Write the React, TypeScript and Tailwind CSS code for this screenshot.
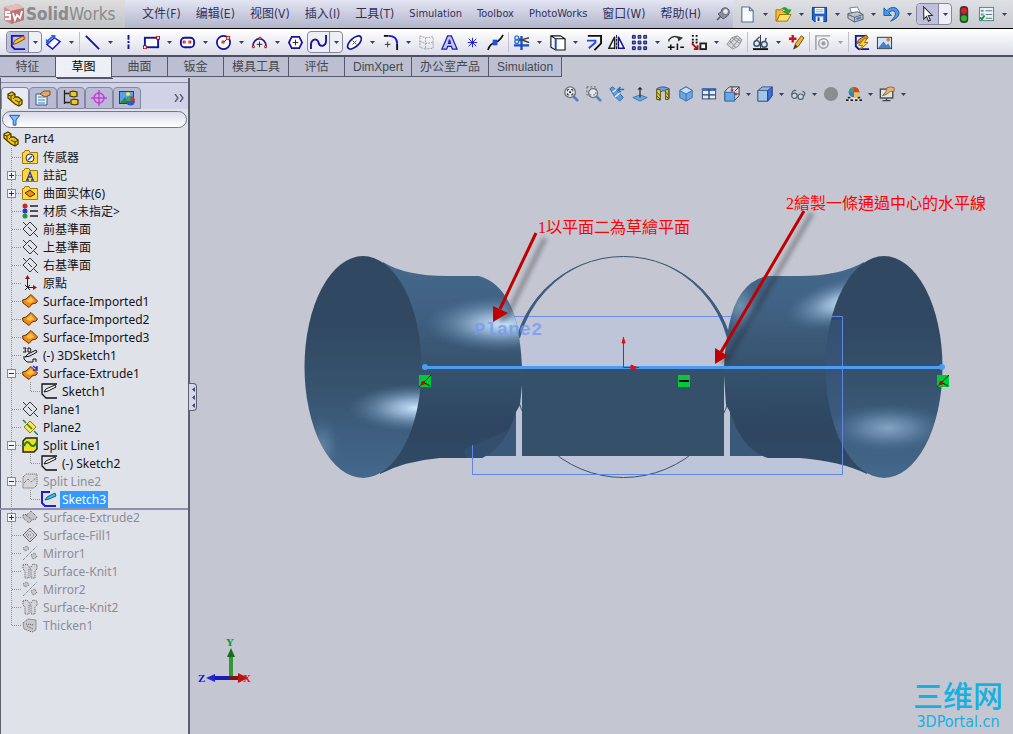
import { useState } from 'react';
import type { ReactNode } from 'react';

const NAVY = '#14149c';

// 18x18 drawings for the toolbars
const toolIcons: Record<string, ReactNode> = {
  sketch: (
    <>
      <path d="M16 2H3V13L6 16H17" fill="none" stroke="#1616c8" strokeWidth="2" />
      <path d="M4 11L6 7L15 2L17 5L8 10Z" fill="#f5c02c" stroke="#6b4510" />
      <path d="M14 3L17 2V6Z" fill="#e06060" />
    </>
  ),
  dimension: (
    <>
      <path d="M2 11L10 4L16 8L8 16Z" fill="#fff" stroke="#1616c8" strokeWidth="1.500" />
      <path d="M2 8L9 2" stroke="#2b62d8" strokeWidth="2" />
      <path d="M1 5V10H6ZM6 1H11V6Z" fill="#2b62d8" />
    </>
  ),
  line: <path d="M2 2L16 16" stroke={NAVY} strokeWidth="2" />,
  centerline: <path d="M9 1V17" stroke={NAVY} strokeWidth="2" strokeDasharray="5 1.5 2 1.5" />,
  rect: (
    <>
      <rect x="2" y="4" width="14" height="10" fill="#fff" stroke={NAVY} strokeWidth="2" />
      <path d="M0 12H4V16H0ZM14 2H18V6H14Z" fill="#b01010" />
      <path d="M1 13H3V15H1ZM15 3H17V5H15Z" fill="#fff" />
    </>
  ),
  slot: (
    <>
      <rect x="2" y="4" width="14" height="10" rx="4" fill="#fff" stroke={NAVY} strokeWidth="2" />
      <rect x="4.500" y="7.500" width="2" height="2" fill="#fff" stroke="#c01010" />
      <rect x="10.500" y="7.500" width="2" height="2" fill="#fff" stroke="#c01010" />
    </>
  ),
  circle: (
    <>
      <circle cx="9" cy="9" r="7" fill="#fff" stroke={NAVY} strokeWidth="1.800" />
      <path d="M9 9L14 4" stroke="#222" />
      <rect x="7.500" y="7.500" width="2" height="2" fill="#fff" stroke="#c01010" />
      <rect x="12.500" y="2.500" width="3" height="3" fill="#fff" stroke="#c01010" />
    </>
  ),
  arc: (
    <>
      <path d="M2 13A7 8 0 0 1 16 13" fill="none" stroke={NAVY} strokeWidth="1.800" />
      <path d="M9 8V14M6 11H12" stroke="#222" />
      <path d="M1.500 12.500H3.500V14.500H1.500ZM14.500 12.500H16.500V14.500H14.500ZM8.500 3.500H10.500V5.500H8.500Z" fill="#fff" stroke="#c01010" />
    </>
  ),
  polygon: (
    <>
      <path d="M5 3H13L16 9L13 15H5L2 9Z" fill="#fff" stroke={NAVY} strokeWidth="1.800" />
      <path d="M9 6V12M6 9H12" stroke="#222" />
    </>
  ),
  spline: <path d="M1 16V12C1 5 8 4 9 9C10 14 17 14 17 7V1" fill="none" stroke={NAVY} strokeWidth="2" />,
  ellipse: (
    <>
      <ellipse cx="9" cy="9" rx="9" ry="4.500" transform="rotate(-42 9 9)" fill="#fff" stroke={NAVY} strokeWidth="1.800" />
      <path d="M7 7L11 11M11 7L7 11" stroke="#444" />
    </>
  ),
  fillet: (
    <>
      <path d="M2 2H7" stroke="#111" strokeWidth="2" />
      <path d="M7 2Q16 2 16 10" fill="none" stroke="#1818e0" strokeWidth="2" />
      <path d="M16 10V17" stroke="#111" strokeWidth="2" />
      <path d="M3 11H9M6 8V14" stroke="#333" />
    </>
  ),
  grid: (
    <path d="M2 2L8 4V16L2 14ZM8 4L16 3V15L8 16M2 8L8 10L16 9" fill="none" stroke="#9a9aa2" strokeDasharray="2 1" />
  ),
  text: (
    <path d="M1 16L7 2H11L17 16H12L11 13H7L6 16ZM8 10H10L9 6Z" fill="#c4c8f4" stroke="#1c1cb0" strokeWidth="1.300" />
  ),
  point: <path d="M9 4V14M4 9H14M5 5L13 13M13 5L5 13" stroke="#1818d8" />,
  midpoint: (
    <>
      <path d="M1 17Q3 10 9 9Q14 7 17 1" fill="none" stroke="#111" strokeWidth="1.800" />
      <rect x="6" y="6" width="5" height="6" fill="#1f4fe0" />
    </>
  ),
  trim: (
    <>
      <path d="M1 12H17M9 2V17" stroke="#1b4fc4" strokeWidth="2.500" />
      <path d="M6 7L17 4M6 5L17 9" stroke="#444" strokeWidth="1.500" />
      <circle cx="4" cy="4" r="2" fill="none" stroke="#2d75d8" strokeWidth="1.500" />
      <circle cx="4" cy="8" r="2" fill="none" stroke="#2d75d8" strokeWidth="1.500" />
    </>
  ),
  convert: (
    <>
      <path d="M2 2H12L17 5V17H7L2 14ZM7 5H17M2 2L7 5V17" fill="#fff" stroke="#111" strokeWidth="1.200" />
      <path d="M7 5V17" stroke="#2048e8" strokeWidth="2" />
    </>
  ),
  offset: (
    <>
      <path d="M3 2H17V10L10 17" fill="none" stroke="#111" strokeWidth="2" />
      <path d="M2 7H11V9L4 15" fill="none" stroke="#2348dc" strokeWidth="2" />
    </>
  ),
  mirror: (
    <>
      <path d="M1 15L7 3V15Z" fill="#fff" stroke="#222" strokeWidth="1.600" />
      <path d="M17 15L11 3V15Z" fill="#fff" stroke={NAVY} strokeWidth="1.600" />
      <path d="M9 1V17" stroke="#111" strokeDasharray="3 1" />
    </>
  ),
  pattern: (
    <path
      d="M1.500 1.500H4.500V4.500H1.500ZM7.500 1.500H10.500V4.500H7.500ZM13.500 1.500H16.500V4.500H13.500ZM1.500 7.500H4.500V10.500H1.500ZM7.500 7.500H10.500V10.500H7.500ZM13.500 7.500H16.500V10.500H13.500ZM1.500 13.500H4.500V16.500H1.500ZM7.500 13.500H10.500V16.500H7.500ZM13.500 13.500H16.500V16.500H13.500Z"
      fill="#5d78e0"
      stroke="#111158"
    />
  ),
  move: (
    <>
      <path d="M2 8V6Q8 0 13 5" fill="none" stroke="#333" strokeWidth="1.500" />
      <path d="M11 2L17 4L12 8Z" fill="#333" />
      <path d="M1 14H8M4 11V17M11 10V17M14 14H18" stroke="#111" strokeWidth="1.600" />
    </>
  ),
  copy: (
    <>
      <path d="M2 2H10M2 6H10M2 9H10" stroke="#111" strokeWidth="2" strokeDasharray="2 2" />
      <path d="M2 10L8 16M8 12V16H4" fill="none" stroke="#b01010" strokeWidth="2" />
      <rect x="11" y="10" width="6" height="6" fill="#fff" stroke="#222" strokeWidth="2" />
    </>
  ),
  knit: (
    <g fill="#d8d8dc" stroke="#8e8e94">
      <path d="M1 11L6 4L12 2L17 6L13 13L7 16Z" />
      <path d="M4 7L10 14M6 4L15 10M9 3L16 8M3 11L12 2M6 15L15 4" fill="none" />
    </g>
  ),
  relations: (
    <>
      <path d="M1 16H17" stroke="#111" strokeWidth="2" />
      <path d="M9 1V15" stroke="#333" />
      <circle cx="5" cy="10" r="3" fill="#dce9f8" stroke="#35516e" strokeWidth="1.500" />
      <circle cx="13" cy="11" r="3" fill="#dce9f8" stroke="#35516e" strokeWidth="1.500" />
      <path d="M3 8L8 3M14 8L15 4" fill="none" stroke="#445a70" strokeWidth="1.500" />
    </>
  ),
  repair: (
    <>
      <path d="M1 5H9M5 1V9" stroke="#d01010" strokeWidth="2.500" />
      <path d="M6 16L8 10L14 2L17 4L11 13Z" fill="#f5b62c" stroke="#704a14" />
      <path d="M6 16L8 11L10 13Z" fill="#333" />
    </>
  ),
  snaps: (
    <g fill="none" stroke="#9c9ca2" strokeWidth="1.500">
      <path d="M17 2H2V17" />
      <circle cx="10" cy="10" r="5" />
      <circle cx="10" cy="10" r="1.500" fill="#9c9ca2" />
    </g>
  ),
  rapid: (
    <>
      <path d="M14 2H3V13L6 16H17" fill="none" stroke={NAVY} strokeWidth="2" />
      <path d="M4 10L6 6L14 1L16 4L8 9Z" fill="#d8962c" stroke="#6b4510" />
      <path d="M12 5L6 12H10L7 17L16 9H12L15 5Z" fill="#ffdc30" stroke="#a06810" />
    </>
  ),
  picture: (
    <>
      <rect x="1.500" y="3.500" width="15" height="12" fill="#cfe4f8" stroke="#333" />
      <path d="M2 15L8 8L11 12L13 10L16 15Z" fill="#4c7fbd" />
      <circle cx="13" cy="6" r="2" fill="#f08020" />
    </>
  ),
  newDoc: (
    <path d="M3 1H11L15 5V17H3ZM11 1V5H15" fill="#f7fbff" stroke="#55748e" strokeWidth="1.200" />
  ),
  open: (
    <>
      <path d="M1 4H7L9 6H13V9H5L2 16H1Z" fill="#f3bd32" stroke="#a8700c" />
      <path d="M5 9H17L13 16H2Z" fill="#ffe06c" stroke="#a8700c" />
      <path d="M7 3Q11 0 14 4L17 4L14 9L9 6L11 5Q10 3 7 3Z" fill="#2ea82e" stroke="#1a801a" strokeWidth=".6" />
    </>
  ),
  save: (
    <>
      <path d="M1.500 1.500H16.500V16.500H3.500L1.500 14.500Z" fill="#1f62cc" stroke="#0e3680" />
      <path d="M4 2H14V8H4Z" fill="#fff" />
      <path d="M5 4H13M5 6H13" stroke="#8aa6cf" />
      <path d="M5 11H13V17H5Z" fill="#e8edf5" />
      <path d="M7 12H9V16H7Z" fill="#1b3f7c" />
    </>
  ),
  print: (
    <>
      <path d="M5 8L3 2L11 1L14 7Z" fill="#fff" stroke="#6d7f92" />
      <path d="M1 8L11 6L17 9V14L8 17L1 13Z" fill="#bfc3ca" stroke="#555c66" />
      <path d="M1 9L8 12L17 9M8 12V17" fill="none" stroke="#555c66" />
      <path d="M10 14L15 12" stroke="#3a7ad0" strokeWidth="2" />
    </>
  ),
  undo: (
    <path d="M1 2V10H9L6 7Q11 3 13 7Q14 11 8 16Q17 13 17 7Q15 0 8 2Q6 3 4 5Z" fill="#4c9ae8" stroke="#1a559e" />
  ),
  cursor: <path d="M5 1V14L8 11L10 16L12 15L10 10H14Z" fill="#fff" stroke="#333" strokeWidth="1.200" />,
  light: (
    <>
      <rect x="5" y="0" width="9" height="18" rx="4" fill="#3a3a3a" />
      <circle cx="9.500" cy="5" r="3.200" fill="#e81c1c" />
      <circle cx="9.500" cy="13" r="3.200" fill="#22c022" />
    </>
  ),
  options: (
    <>
      <rect x="1.500" y="1.500" width="15" height="14" fill="#e9f3f6" stroke="#51808c" />
      <path d="M3 4H6V6H3ZM3 8H6V10H3Z" fill="#6f98a4" />
      <path d="M8 5H15M8 9H15M8 13H15" stroke="#5a7580" />
      <path d="M2 12L4 14L7 10" fill="none" stroke="#1d9030" strokeWidth="2" />
    </>
  ),
  zoomFit: (
    <>
      <path d="M12 12L16 16" stroke="#4c86c8" strokeWidth="3" strokeLinecap="round" />
      <circle cx="8" cy="7" r="6" fill="#e3e9f0" stroke="#6e7378" strokeWidth="1.500" />
      <path d="M5 6V4H7M9 4H11V6M11 8V10H9M7 10H5V8" fill="none" stroke="#222" />
      <path d="M7 6H9V8H7Z" fill="#222" />
    </>
  ),
  zoomArea: (
    <>
      <path d="M12 12L16 16" stroke="#4c86c8" strokeWidth="3" strokeLinecap="round" />
      <circle cx="8" cy="8" r="5" fill="#e3e9f0" stroke="#6e7378" strokeWidth="1.500" />
      <path d="M1 1H11V10H1Z" fill="none" stroke="#555" strokeDasharray="2 2" />
    </>
  ),
  previous: (
    <>
      <path d="M1 3L4 1L11 7L16 13L12 17L6 11Z" fill="#5f9fe0" stroke="#2b5d98" />
      <path d="M4 7L8 4M7 12L12 8" stroke="#e6f2fc" strokeWidth="1.500" />
      <path d="M17 4H11M13 1L10 4L13 7" fill="none" stroke="#2c66c8" strokeWidth="1.600" />
    </>
  ),
  normal: (
    <>
      <path d="M1 13L9 10L17 13L9 17Z" fill="#6ba7e4" stroke="#3a70ac" />
      <path d="M9 13V3" stroke="#222" strokeWidth="1.300" />
      <path d="M6 4L9 1L12 4Z" fill="#222" />
    </>
  ),
  section: (
    <>
      <path d="M2 3Q9 -1 16 3V14Q14 16 12 15V6Q9 4 6 7V16L2 15Z" fill="#68a4e4" stroke="#274f88" />
      <path d="M2 4H6V15H2ZM12 4H15V15H12Z" fill="#f2d32c" stroke="#66520c" />
      <path d="M2 7L6 11M2 11L6 15M12 7L15 10M12 11L15 14" stroke="#4a3c08" />
    </>
  ),
  orientation: (
    <>
      <path d="M2 5L9 1L16 5V13L9 17L2 13Z" fill="#69a8e6" stroke="#37699e" />
      <path d="M2 5L9 1L16 5L9 9Z" fill="#c4e0fa" stroke="#37699e" />
      <path d="M9 9V17" stroke="#37699e" />
    </>
  ),
  views: (
    <>
      <rect x="1.500" y="3.500" width="15" height="11" fill="#e6edf6" stroke="#2a3f6a" />
      <path d="M1 4H17" stroke="#3964b8" strokeWidth="3" />
      <path d="M9 4V15M2 10H16" stroke="#2a3f6a" strokeWidth="1.500" />
    </>
  ),
  standard: (
    <>
      <path d="M1 6L6 1H17V11L12 16H1Z" fill="#d4d8e2" stroke="#333" />
      <path d="M1 7H12V17H1Z" fill="#6aa6e4" stroke="#2b5d98" />
      <path d="M12 6L17 1M9 1V5M17 9H13" stroke="#333" />
      <path d="M7 4L9 7L11 4ZM14 7V11L11 9Z" fill="#c82020" />
    </>
  ),
  display: (
    <>
      <path d="M1 5L6 1H17V11L12 17H1Z" fill="#8fb9ee" stroke="#334c88" />
      <path d="M1 5H12V17H1Z" fill="#9dc8f2" stroke="#4a5668" />
      <path d="M12 5L17 1V11L12 17Z" fill="#3e6fd4" stroke="#263c88" />
    </>
  ),
  glasses: (
    <>
      <circle cx="5" cy="11" r="3" fill="#c9dcec" stroke="#56616e" strokeWidth="1.300" />
      <circle cx="12" cy="12" r="3" fill="#c9dcec" stroke="#56616e" strokeWidth="1.300" />
      <path d="M8 11L9 12M2 10Q2 4 7 5M15 12Q19 7 14 6" fill="none" stroke="#56616e" strokeWidth="1.300" />
    </>
  ),
  sphere: <circle cx="9" cy="9" r="8" fill="#8b8d93" />,
  appearance: (
    <>
      <path d="M3 11H15L18 17H0Z" fill="#e6e6e6" />
      <path d="M2 12H5V14H2ZM13 12H16V14H13ZM0 15H3V17H0ZM5 15H8V17H5ZM10 15H13V17H10ZM15 15H18V17H15Z" fill="#222" />
      <circle cx="9" cy="7" r="6" fill="#3c76dc" />
      <path d="M9 1A6 6 0 0 1 15 7H9Z" fill="#e23a2c" />
      <path d="M9 1A6 6 0 0 0 3 7H9Z" fill="#3fa848" />
      <path d="M15 7A6 6 0 0 1 9 13V7Z" fill="#f1c832" />
    </>
  ),
  scene: (
    <>
      <rect x="1.500" y="3.500" width="14" height="10" fill="#dfe3ea" stroke="#444" strokeWidth="1.500" />
      <path d="M4 16.500H13M8.500 14V16" stroke="#444" strokeWidth="1.500" />
      <path d="M9 2L13 1L17 2V6L13 6L9 9L4 11L8 6Z" fill="#e9b670" stroke="#8c602c" />
    </>
  ),
};

const SURFACE = (
  <>
    <path d="M0.500 7L4 6L9 1.500L15.500 8L14 10L10 11L7 14.500L1 10Z" fill="#f08c14" stroke="#5c3006" />
    <path d="M4 8L9 4L12 8L8 10Z" fill="#ffc04c" />
  </>
);

const PENCIL = (
  <>
    <path d="M16 1H1V11L5 15H16" fill="none" stroke="#111" strokeWidth="1.300" />
    <path d="M3 9L5 6L14 2L15 4L7 8Z" fill="#fff" stroke="#111" />
  </>
);

const FOLDER = <path d="M.500 3.500H2L3 1.500H7L8 3.500H15.500V14.500H.500Z" fill="#ffd83c" stroke="#a8780c" />;

const PLANE = (
  <path d="M1 8L8 1L15 8L8 15ZM1 1L4 4M6 6L10 10M12 12L16 16" fill="none" stroke="#333" />
);

const PART = (
  <>
    <path d="M1 3L5 1L8 3V6L11 6L15 9V13L12 15L8 13L1 7Z" fill="#f0c818" stroke="#4c3c04" strokeWidth="1.300" />
    <path d="M1 4L4 5L8 3M4 5V9M8 9L12 11L15 9M12 11V15M8 6L6 8" fill="none" stroke="#4c3c04" />
  </>
);

const MIRROR = (
  <g fill="#c9c9cd" stroke="#66666a" strokeDasharray="1 1">
    <path d="M1 3L5 1L7 4L3 6ZM9 10L13 8L15 12L11 14Z" />
    <path d="M1 15L15 1" />
  </g>
);

const KNIT = (
  <path
    d="M1 2L5 1L7 4L9 4L11 1L15 2V6L13 8V15H9V6L7 6V15H3V8L1 6Z"
    fill="#d5d5d9"
    stroke="#555559"
    strokeDasharray="1 1"
  />
);

// 16x16 drawings for the feature tree
const treeIcons: Record<string, ReactNode> = {
  part: PART,
  sensor: (
    <>
      {FOLDER}
      <circle cx="8" cy="9" r="4" fill="#eef4fa" stroke="#333" />
      <path d="M6 11L10 7" stroke="#2a55c0" strokeWidth="1.500" />
    </>
  ),
  note: (
    <>
      {FOLDER}
      <path d="M4 13H7M9 13H12M5 13L8 5L11 13M6 10H10" fill="none" stroke="#1c3cb4" strokeWidth="1.300" />
    </>
  ),
  bodies: (
    <>
      {FOLDER}
      <path d="M3 8L8 5L13 9L8 12Z" fill="#f08c18" stroke="#4c2c04" />
    </>
  ),
  material: (
    <>
      <circle cx="3" cy="3" r="2.500" fill="#d82020" />
      <circle cx="3" cy="8" r="2.500" fill="#2038c8" />
      <circle cx="3" cy="13" r="2.500" fill="#1c9838" />
      <path d="M8 3H16M8 8H16M8 13H16" stroke="#222" strokeWidth="1.500" />
    </>
  ),
  plane: PLANE,
  origin: (
    <>
      <path d="M5.500 12.500V3M5 12.500H13" stroke="#222" />
      <path d="M3 4L5.500 0L8 4ZM11 10L15 12.500L11 15Z" fill="#981818" />
      <path d="M3 10L8 15M8 10L3 15" stroke="#222" />
    </>
  ),
  surface: SURFACE,
  sketch3d: (
    <>
      <path d="M1 1H4L3 3L4 5H1M6 1V5H8Q10 3 8 1Z" fill="none" stroke="#111" />
      <path d="M3 10L6 7L14 3L15 5L8 9ZM2 9V12L5 15H11V12H14V15" fill="none" stroke="#111" />
    </>
  ),
  extrude: (
    <>
      {SURFACE}
      <path d="M11 1L15 4M15 1V5H11" fill="none" stroke="#1c30d8" strokeWidth="1.500" />
    </>
  ),
  sketch: PENCIL,
  plane2: (
    <>
      <path d="M2 8L8 2L14 8L8 14Z" fill="#ffe24c" stroke="#947414" />
      <path d="M1 1L4 4M5 5L10 10M12 12L16 16" stroke="#189028" strokeWidth="1.500" />
    </>
  ),
  split: (
    <>
      <path d="M1 4L4 1H15V12L12 15H1Z" fill="#f2e018" stroke="#222" strokeWidth="1.500" />
      <path d="M2 9Q5 2 8 7T15 5" fill="none" stroke="#188028" strokeWidth="2" />
    </>
  ),
  splitOff: (
    <path d="M1 4L4 1H15V12L12 15H1ZM2 10L6 6L9 9L14 5" fill="#d6d6da" stroke="#555559" strokeDasharray="1 1" />
  ),
  sketchActive: (
    <>
      <path d="M9 1H1V12L4 15H15" fill="none" stroke="#1c1ce0" strokeWidth="2" />
      <path d="M4 9L6 6L14 2L15 5L8 8Z" fill="#30c8e8" stroke="#145c80" />
    </>
  ),
  surfaceOff: (
    <path d="M1 6L6 5L9 2L15 8L14 10L10 11L7 14L1 9ZM4 6L10 11" fill="#c4c4c8" stroke="#555559" strokeDasharray="1 1" />
  ),
  fill: (
    <g fill="none" stroke="#66666a">
      <path d="M1 8L8 1L15 8L8 15Z" fill="#d4d4d8" />
      <path d="M4 8L8 4L12 8L8 12ZM6 8H10" strokeDasharray="1 1" />
    </g>
  ),
  mirror: MIRROR,
  knit: KNIT,
  thicken: (
    <path d="M1 6L6 2L14 3V13L10 15L2 12ZM4 7L12 8M5 9L11 12" fill="#c8c8cc" stroke="#555559" strokeDasharray="1 1" />
  ),
};

type Tool = { icon: string; label: string; menu?: boolean; framed?: boolean; pressed?: boolean; sep?: boolean; off?: boolean };

const sketchTools: Tool[] = [
  { icon: 'sketch', label: 'Sketch', menu: true, framed: true, pressed: true },
  { icon: 'dimension', label: 'Smart Dimension', menu: true, sep: true },
  { icon: 'line', label: 'Line', menu: true },
  { icon: 'centerline', label: 'Centerline' },
  { icon: 'rect', label: 'Rectangle', menu: true },
  { icon: 'slot', label: 'Slot', menu: true },
  { icon: 'circle', label: 'Circle', menu: true },
  { icon: 'arc', label: 'Arc', menu: true },
  { icon: 'polygon', label: 'Polygon' },
  { icon: 'spline', label: 'Spline', menu: true, framed: true },
  { icon: 'ellipse', label: 'Ellipse', menu: true },
  { icon: 'fillet', label: 'Fillet', menu: true },
  { icon: 'grid', label: 'Grid' },
  { icon: 'text', label: 'Text' },
  { icon: 'point', label: 'Point' },
  { icon: 'midpoint', label: 'Midpoint', sep: true },
  { icon: 'trim', label: 'Trim', menu: true },
  { icon: 'convert', label: 'Convert Entities', menu: true },
  { icon: 'offset', label: 'Offset' },
  { icon: 'mirror', label: 'Mirror' },
  { icon: 'pattern', label: 'Linear Pattern', menu: true },
  { icon: 'move', label: 'Move' },
  { icon: 'copy', label: 'Copy', menu: true },
  { icon: 'knit', label: 'Knit', sep: true },
  { icon: 'relations', label: 'Relations', menu: true },
  { icon: 'repair', label: 'Repair', sep: true },
  { icon: 'snaps', label: 'Quick Snaps', menu: true, sep: true, off: true },
  { icon: 'rapid', label: 'Rapid Sketch' },
  { icon: 'picture', label: 'Sketch Picture' },
];

const fileTools: Tool[] = [
  { icon: 'newDoc', label: 'New', menu: true },
  { icon: 'open', label: 'Open', menu: true },
  { icon: 'save', label: 'Save', menu: true },
  { icon: 'print', label: 'Print', menu: true },
  { icon: 'undo', label: 'Undo', menu: true },
  { icon: 'cursor', label: 'Select', menu: true, framed: true, pressed: true },
  { icon: 'light', label: 'Rebuild' },
  { icon: 'options', label: 'Options', menu: true },
];

const viewTools: Tool[] = [
  { icon: 'zoomFit', label: 'Zoom to Fit' },
  { icon: 'zoomArea', label: 'Zoom to Area' },
  { icon: 'previous', label: 'Previous View' },
  { icon: 'normal', label: 'Normal To' },
  { icon: 'section', label: 'Section View' },
  { icon: 'orientation', label: 'Orientation' },
  { icon: 'views', label: 'Viewports' },
  { icon: 'standard', label: 'Standard Views', menu: true },
  { icon: 'display', label: 'Display Style', menu: true },
  { icon: 'glasses', label: 'Hide/Show', menu: true },
  { icon: 'sphere', label: 'Shadows' },
  { icon: 'appearance', label: 'Appearance', menu: true },
  { icon: 'scene', label: 'View Settings', menu: true },
];

const menus = ['文件(F)', '编辑(E)', '视图(V)', '插入(I)', '工具(T)', 'Simulation', 'Toolbox', 'PhotoWorks', '窗口(W)', '帮助(H)'];
const tabs = ['特征', '草图', '曲面', '钣金', '模具工具', '评估', 'DimXpert', '办公室产品', 'Simulation'];

type Row = { name: string; icon: string; level?: number; box?: '+' | '-'; off?: boolean; selected?: boolean; last?: boolean };

const rows: Row[] = [
  { name: '传感器', icon: 'sensor' },
  { name: '註記', icon: 'note', box: '+' },
  { name: '曲面实体(6)', icon: 'bodies', box: '+' },
  { name: '材质 <未指定>', icon: 'material' },
  { name: '前基準面', icon: 'plane' },
  { name: '上基準面', icon: 'plane' },
  { name: '右基準面', icon: 'plane' },
  { name: '原點', icon: 'origin' },
  { name: 'Surface-Imported1', icon: 'surface' },
  { name: 'Surface-Imported2', icon: 'surface' },
  { name: 'Surface-Imported3', icon: 'surface' },
  { name: '(-) 3DSketch1', icon: 'sketch3d' },
  { name: 'Surface-Extrude1', icon: 'extrude', box: '-' },
  { name: 'Sketch1', icon: 'sketch', level: 2 },
  { name: 'Plane1', icon: 'plane' },
  { name: 'Plane2', icon: 'plane2' },
  { name: 'Split Line1', icon: 'split', box: '-' },
  { name: '(-) Sketch2', icon: 'sketch', level: 2 },
  { name: 'Split Line2', icon: 'splitOff', box: '-', off: true },
  { name: 'Sketch3', icon: 'sketchActive', level: 2, selected: true },
  { name: 'Surface-Extrude2', icon: 'surfaceOff', box: '+', off: true },
  { name: 'Surface-Fill1', icon: 'fill', off: true },
  { name: 'Mirror1', icon: 'mirror', off: true },
  { name: 'Surface-Knit1', icon: 'knit', off: true },
  { name: 'Mirror2', icon: 'mirror', off: true },
  { name: 'Surface-Knit2', icon: 'knit', off: true },
  { name: 'Thicken1', icon: 'thicken', off: true, last: true },
];

const Caret = ({ off }: { off?: boolean }) => (
  <svg width="5" height="3" viewBox="0 0 5 3">
    <path d="M0 0H5L2.500 3Z" fill={off ? '#9c9ca6' : '#3c3c64'} />
  </svg>
);

const ToolButton = ({ tool, small }: { tool: Tool; small?: boolean }) => (
  <>
    <div className={`flex h-[22px] shrink-0 ${tool.framed ? 'rounded border border-[#85879c] bg-[#eeeff6]' : ''}`}>
      <button
        type="button"
        aria-label={tool.label}
        className={`flex items-center justify-center ${tool.framed ? 'w-[22px] rounded-l border-r border-[#85879c]' : 'w-[23px]'} ${tool.pressed ? 'bg-[#bfc1dc]' : ''}`}
      >
        <svg className={small ? 'size-4' : 'size-[17px]'} viewBox="0 0 18 18">
          {toolIcons[tool.icon]}
        </svg>
      </button>
      {tool.menu && (
        <button
          type="button"
          aria-label={`${tool.label} menu`}
          className={`flex items-center justify-center ${small ? 'w-[10px]' : tool.framed ? 'w-3' : 'w-[13px]'}`}
        >
          <Caret off={tool.off} />
        </button>
      )}
    </div>
    {tool.sep && <span className="mx-px h-5 w-px shrink-0 bg-[#c0c1cc]" />}
  </>
);

const TitleBar = () => (
  <header className="flex h-[29px] border-b border-black">
    <div className="flex w-[125px] shrink-0 items-center bg-linear-to-b from-[#dededf] to-[#c2c3c6] pl-[3px]">
      <svg className="size-[22px] shrink-0" viewBox="0 0 22 22">
        <path d="M1 4L15 1L21 5V17L8 21L1 17Z" fill="#c98f92" />
        <path d="M1 4L15 1L21 5L8 8Z" fill="#e3bdbe" />
        <path d="M8 8L21 5V17L8 21Z" fill="#b8767a" />
        <path d="M7 9H3V12H7V16H2M10 10L12 17L14 12L17 15L19 8" fill="none" stroke="#fff" strokeWidth="1.800" />
      </svg>
      <span className="ml-px text-[17px] leading-6 text-[#8a8a8c]">
        <b>Solid</b>Works
      </span>
    </div>
    <nav className="flex w-[608px] shrink-0 items-center gap-[15px] bg-linear-to-b from-[#e3e5f3] to-[#b3b6cb] pl-[17px] text-[#30305c]">
      {menus.map((m) => (
        <button key={m} type="button" className={`shrink-0 whitespace-nowrap ${m.includes('(') ? 'text-xs' : 'text-[11px]'}`}>
          {m}
        </button>
      ))}
      <button type="button" aria-label="Pin menu">
        <svg className="size-[14px]" viewBox="0 0 14 14">
          <path d="M1 13L5 9" stroke="#555" strokeWidth="1.500" />
          <path d="M2 7L5 5L6 2Q10 -1 13 3Q14 8 10 10L7 12Z" fill="#8c8ea0" stroke="#55576a" />
          <circle cx="9.500" cy="4.500" r="3" fill="#e6e8f0" stroke="#6b6d7c" />
        </svg>
      </button>
    </nav>
    <div className="flex flex-1 items-center bg-linear-to-b from-[#dfe0e4] to-[#c9cbd2] pl-[3px]">
      {fileTools.map((t) => (
        <ToolButton key={t.icon} tool={t} />
      ))}
    </div>
  </header>
);

const CommandTabs = () => {
  const [active, setActive] = useState('草图');

  return (
    <div className="flex h-[21px] items-start font-['Liberation_Sans','Noto_Sans_CJK_SC',sans-serif]">
      {tabs.map((t) => (
        <button
          key={t}
          type="button"
          onClick={() => setActive(t)}
          className={`min-w-14 whitespace-nowrap border-r border-b border-[#555a6c] px-2 text-xs ${
            active === t ? 'h-[21px] bg-[#eef0f7] text-black' : 'h-5 bg-[#bcbfd2] text-[#46474e]'
          }`}
        >
          {t}
        </button>
      ))}
    </div>
  );
};

const Gutter = ({ row }: { row: Row }) => (
  <svg className="shrink-0" width={row.level === 2 ? 41 : 22} height="18" viewBox={row.level === 2 ? '0 0 41 18' : '0 0 22 18'}>
    <g fill="none" stroke="#8c8e98" strokeDasharray="1 1">
      <path d={row.last ? 'M11.500 0V9' : 'M11.500 0V18'} />
      <path d={row.level === 2 ? 'M30.500 0V9.500H40' : 'M12 9.500H21'} />
    </g>
    {row.box && (
      <>
        <rect x="7.500" y="5.500" width="8" height="8" fill="#f4f5fa" stroke="#888a96" />
        <path d={row.box === '+' ? 'M9 9.500H14M11.500 7V12' : 'M9 9.500H14'} stroke="#28288c" />
      </>
    )}
  </svg>
);

const FeatureTree = () => (
  <ul className="font-['Noto_Sans','Noto_Sans_CJK_TC',sans-serif] text-xs text-[#141418]">
    <li className="flex h-[18px] items-center gap-[5px] pl-[3px]">
      <svg className="size-4" viewBox="0 0 16 16">{treeIcons.part}</svg>
      Part4
    </li>
    {rows.map((row) => (
      <li key={row.name} className={`flex h-[18px] items-center ${row.selected ? 'relative' : ''}`}>
        <Gutter row={row} />
        <svg className="size-4 shrink-0" viewBox="0 0 16 16">{treeIcons[row.icon]}</svg>
        <span
          className={`ml-[3px] whitespace-nowrap px-0.5 leading-[17px] ${row.off ? 'text-[#8b8d96]' : ''} ${row.selected ? 'bg-[#3399ff] text-white' : ''}`}
        >
          {row.name}
        </span>
        {/* Rollback bar */}
        {row.selected && <span className="absolute inset-x-0 top-full h-0.5 bg-[#8f90ae]" />}
      </li>
    ))}
  </ul>
);

const panelTabs: { label: string; art: ReactNode }[] = [
  { label: 'FeatureManager', art: PART },
  {
    label: 'PropertyManager',
    art: (
      <>
        <path d="M1 4H12V15H1Z" fill="#e4f1fc" stroke="#3a5a80" />
        <path d="M3 7H10M3 10H10M3 13H10" stroke="#3a80d0" />
        <path d="M5 4L9 1H15V5L10 7Z" fill="#e2a868" stroke="#7c5020" />
      </>
    ),
  },
  {
    label: 'ConfigurationManager',
    art: (
      <>
        <path d="M1.500 0V14M1 3.500H6M1 12.500H7" fill="none" stroke="#222" strokeWidth="1.300" />
        <path d="M7 2L10 1L14 2V6L11 7L7 6ZM8 10L11 9L15 10V14L12 15L8 14Z" fill="#f2c81c" stroke="#3c3004" strokeWidth="1.200" />
      </>
    ),
  },
  {
    label: 'DimXpertManager',
    art: (
      <>
        <circle cx="8" cy="8" r="5" fill="none" stroke="#c83cd8" strokeWidth="1.500" />
        <path d="M8 0V16M0 8H16" stroke="#c83cd8" strokeWidth="1.500" />
      </>
    ),
  },
  {
    label: 'DisplayManager',
    art: (
      <>
        <rect x=".5" y="1.500" width="14" height="12" fill="#5aa0ec" stroke="#1e3c78" />
        <path d="M1 13L6 7L10 13Z" fill="#2c8c3c" />
        <circle cx="9" cy="4" r="2" fill="#ffe040" />
        <circle cx="11.500" cy="11" r="4.500" fill="#2c58d0" />
        <path d="M11.500 6.500A4.500 4.500 0 0 1 16 11H11.500Z" fill="#e03020" />
        <path d="M11.500 6.500A4.500 4.500 0 0 0 7 11H11.500Z" fill="#30b040" />
      </>
    ),
  },
];

const SidePanel = () => (
  <aside className="relative w-[190px] shrink-0 border-r-2 border-l border-[#5c5e72] bg-[#e0e2ea]">
    <div className="flex h-[5px] justify-center border-b border-[#8b8da2] bg-[#d3d6e6] pr-5">
      <span className="h-px w-14 bg-[#565869]" />
    </div>
    <div className="flex h-[26px] items-end bg-[#d0d2e8] pr-1">
      {panelTabs.map((t, i) => (
        <button
          key={t.label}
          type="button"
          aria-label={t.label}
          className={`flex h-[22px] w-7 items-center justify-center rounded-t border border-[#8688a2] ${i === 0 ? 'border-b-0 bg-[#e8eaf2]' : 'bg-[#b9bbd4]'}`}
        >
          <svg className="size-4" viewBox="0 0 16 16">{t.art}</svg>
        </button>
      ))}
      <button type="button" aria-label="Expand panel" className="ml-auto flex h-[22px] items-center">
        <svg width="10" height="8" viewBox="0 0 10 8">
          <path d="M1 0L4 4L1 8M6 0L9 4L6 8" fill="none" stroke="#54566c" strokeWidth="1.300" />
        </svg>
      </button>
    </div>
    <label className="mx-px mt-0.5 flex h-[17px] items-center rounded-full border border-[#75778e] bg-linear-to-b from-[#d9dbe8] to-white pl-1.5">
      <svg className="size-3" viewBox="0 0 12 12">
        <path d="M.500 1H11.500L7.500 6V11.500H4.500V6Z" fill="#7cc0f8" stroke="#1c50b8" />
      </svg>
      <input type="text" aria-label="Filter" className="h-3 w-full min-w-0 bg-transparent px-1 text-xs outline-none" />
    </label>
    <div className="-ml-px pt-0.5">
      <FeatureTree />
    </div>
    {/* Splitter handle */}
    <button
      type="button"
      aria-label="Collapse panel"
      className="absolute top-[305px] -right-[9px] z-10 flex h-7 w-2 items-center justify-center rounded-r border border-l-0 border-[#5c5e72] bg-[#d6d8e6]"
    >
      <svg width="4" height="21" viewBox="0 0 4 21">
        <path d="M4 0V5L1 2.500ZM4 8V13L1 10.500ZM4 16V21L1 18.500Z" fill="#44468c" />
      </svg>
    </button>
  </aside>
);

const Model = () => (
  <svg className="absolute inset-0 size-full" viewBox="190 78 823 656">
    <defs>
      <linearGradient id="body" x1="0" y1="262" x2="0" y2="474" gradientUnits="userSpaceOnUse">
        <stop offset="0" stopColor="#44688b" />
        <stop offset=".2" stopColor="#416284" />
        <stop offset=".5" stopColor="#36526d" />
        <stop offset=".78" stopColor="#2e4660" />
        <stop offset="1" stopColor="#304a66" />
      </linearGradient>
      <linearGradient id="mouth" x1="0" y1="256" x2="0" y2="478" gradientUnits="userSpaceOnUse">
        <stop offset="0" stopColor="#304862" />
        <stop offset=".3" stopColor="#304861" />
        <stop offset=".6" stopColor="#37546f" />
        <stop offset="1" stopColor="#44698d" />
      </linearGradient>
      <radialGradient id="shine">
        <stop offset="0" stopColor="#cbe6ff" />
        <stop offset=".35" stopColor="#a9c8e6" stopOpacity=".75" />
        <stop offset="1" stopColor="#5c82a6" stopOpacity="0" />
      </radialGradient>
      <radialGradient id="glow">
        <stop offset="0" stopColor="#86a5c5" />
        <stop offset=".4" stopColor="#7394b5" stopOpacity=".7" />
        <stop offset="1" stopColor="#4c7093" stopOpacity="0" />
      </radialGradient>
      <filter id="soft" x="-20%" y="-20%" width="140%" height="140%">
        <feGaussianBlur stdDeviation="2" />
      </filter>
      <clipPath id="leftBody">
        <path d="M383 262Q405 276 448 276H479Q507 284 517 325Q521 345 522 367V385L520 405L516 412Q506 446 482 458H440Q405 461 380 474Z" />
      </clipPath>
      <clipPath id="rightBody">
        <path d="M864 262Q840 276 799 276H767Q738 282 729 325Q725 345 724 367V375L726 405L730 412Q742 450 768 458H800Q840 461 867 474Z" />
      </clipPath>
      <clipPath id="leftMouth">
        <ellipse cx="363" cy="367" rx="58.500" ry="111" />
      </clipPath>
      <clipPath id="rightMouth">
        <ellipse cx="884" cy="367" rx="58.500" ry="111" />
      </clipPath>
    </defs>

    {/* Reference plane */}
    <rect x="472.500" y="316.500" width="370" height="158" fill="#b4c4e8" fillOpacity=".35" stroke="#6c90ec" />

    {/* Centre circle and block */}
    <circle cx="623.500" cy="367" r="110.500" fill="none" stroke="#38536e" />
    <path
      d="M516.800 338A110.500 110.500 0 0 1 590 261.700A112 112 0 0 0 520 338ZM730.200 338A110.500 110.500 0 0 0 657 261.700A112 112 0 0 1 727 338Z"
      fill="#3b5c7e"
    />
    <rect x="522" y="367" width="202" height="89" fill="#355069" />

    {/* Left horn */}
    <path d="M472 440L516 410V456H472Z" fill="#3a5878" />
    <g clipPath="url(#leftBody)">
      <rect x="370" y="255" width="155" height="225" fill="url(#body)" />
      <ellipse cx="502" cy="324" rx="78" ry="28" fill="url(#shine)" />
      <path d="M465 449L522 424V460H465Z" fill="#38557a" fillOpacity=".5" />
    </g>
    <g clipPath="url(#leftMouth)">
      <rect x="300" y="250" width="125" height="235" fill="url(#mouth)" />
      <ellipse cx="416" cy="408" rx="68" ry="24" fill="url(#shine)" />
      <ellipse cx="322" cy="446" rx="18" ry="30" fill="url(#glow)" opacity=".5" />
    </g>

    {/* Right horn */}
    <path d="M730 405L776 440V456H730Z" fill="#3a5878" />
    <g clipPath="url(#rightBody)">
      <rect x="720" y="255" width="155" height="225" fill="url(#body)" />
      <ellipse cx="846" cy="302" rx="62" ry="24" fill="url(#shine)" transform="rotate(-14 846 302)" />
      <ellipse cx="740" cy="306" rx="22" ry="28" fill="url(#glow)" opacity=".7" />
    </g>
    <g clipPath="url(#rightMouth)">
      <rect x="820" y="250" width="125" height="235" fill="url(#mouth)" />
      <path d="M825 320H842V460H825Z" fill="#3c5c84" opacity=".45" />
      <ellipse cx="888" cy="428" rx="60" ry="24" fill="url(#glow)" />
    </g>
    <path d="M831 316.500H842.500V474.500H472.500V445" fill="none" stroke="#5f86e4" />

    <text x="474" y="335" fontSize="19" fontFamily="Liberation Mono, monospace" fontWeight="bold" fill="#7298f0" fillOpacity=".75">
      Plane2
    </text>

    {/* Sketch line with its relations */}
    <path d="M425 367.500H942" stroke="#4a9cf4" strokeWidth="3" />
    <circle cx="425" cy="367" r="3" fill="#4a9cf4" />
    <circle cx="942" cy="367" r="3" fill="#4a9cf4" />
    <path d="M623.500 337V367.500H639" fill="none" stroke="#f00" />
    <path d="M622 343L623.500 338L625 343ZM631 365L637 367.500L631 370Z" fill="#f00" stroke="#f00" />
    {[419, 937].map((x) => (
      <g key={x}>
        <rect x={x} y="375" width="12" height="12" fill="#04c83c" />
        <path d={`M${x} 387L${x + 12} 375M${x + 4} 382L${x + 11} 386`} stroke="#111" />
        <circle cx={x + 4} cy="383" r="2" fill="#d00000" />
      </g>
    ))}
    <rect x="678" y="375" width="12" height="12" fill="#04c83c" />
    <path d="M679 381H689" stroke="#000" strokeWidth="2" />

    {/* Callout arrows */}
    <g filter="url(#soft)" opacity=".35">
      <path d="M545 238L507 316M812 213L728 358" stroke="#222" strokeWidth="5" />
      <path d="M500 324L500 309L514 315ZM721 366L722 351L734 358Z" fill="#222" />
    </g>
    <path d="M536 233L500 309M804 211L721 352" stroke="#c00000" strokeWidth="3" />
    <path d="M493 322V306L508 313ZM715 364V348L728 356Z" fill="#c00000" />
    <g fontSize="16" fontFamily="Liberation Serif, Noto Sans CJK TC, sans-serif" fill="#ff0000">
      <text x="538" y="233">1以平面二為草繪平面</text>
      <text x="786" y="209">2繪製一條通過中心的水平線</text>
    </g>

    {/* Axis triad */}
    <path d="M231 678V655" stroke="#2f9a34" strokeWidth="4" />
    <path d="M227 657L231 648L235 657Z" fill="#176c1c" />
    <path d="M231 678H214" stroke="#1c1cb4" strokeWidth="4" />
    <path d="M215 674L206 678L215 682Z" fill="#2424d4" />
    <path d="M230 678H240" stroke="#7c1414" strokeWidth="4" />
    <path d="M238 673L248 678L238 683Z" fill="#b81414" />
    <g fontSize="11" fontWeight="bold" fontFamily="Liberation Serif, serif">
      <text x="226" y="646" fill="#109018">Y</text>
      <text x="198" y="682" fill="#1010e8">Z</text>
      <text x="243" y="682" fill="#f01010">X</text>
    </g>
  </svg>
);

const Viewport = () => (
  <main className="relative min-w-0 flex-1">
    <Model />
    <div className="relative flex justify-end pt-[5px] pr-[105px]">
      {viewTools.map((t) => (
        <ToolButton key={t.icon} tool={t} small />
      ))}
    </div>
    {/* Watermark */}
    <div className="absolute right-2.5 bottom-1 text-center text-[#18b0e0]">
      <div className="text-3xl leading-[34px] font-medium">三维网</div>
      <div className="text-base leading-4">3DPortal.cn</div>
    </div>
  </main>
);

const App = () => (
  <div className="flex min-h-screen flex-col overflow-hidden bg-[#c4c7d2] font-['DejaVu_Sans_Condensed','Noto_Sans_CJK_SC',sans-serif]">
    <TitleBar />
    <div className="flex h-7 items-center border-b-2 border-[#4c5062] bg-linear-to-b from-white to-[#dcdde9] pl-1.5">
      {sketchTools.map((t) => (
        <ToolButton key={t.icon} tool={t} />
      ))}
    </div>
    <CommandTabs />
    <div className="flex flex-1">
      <SidePanel />
      <Viewport />
    </div>
  </div>
);

export default App;
